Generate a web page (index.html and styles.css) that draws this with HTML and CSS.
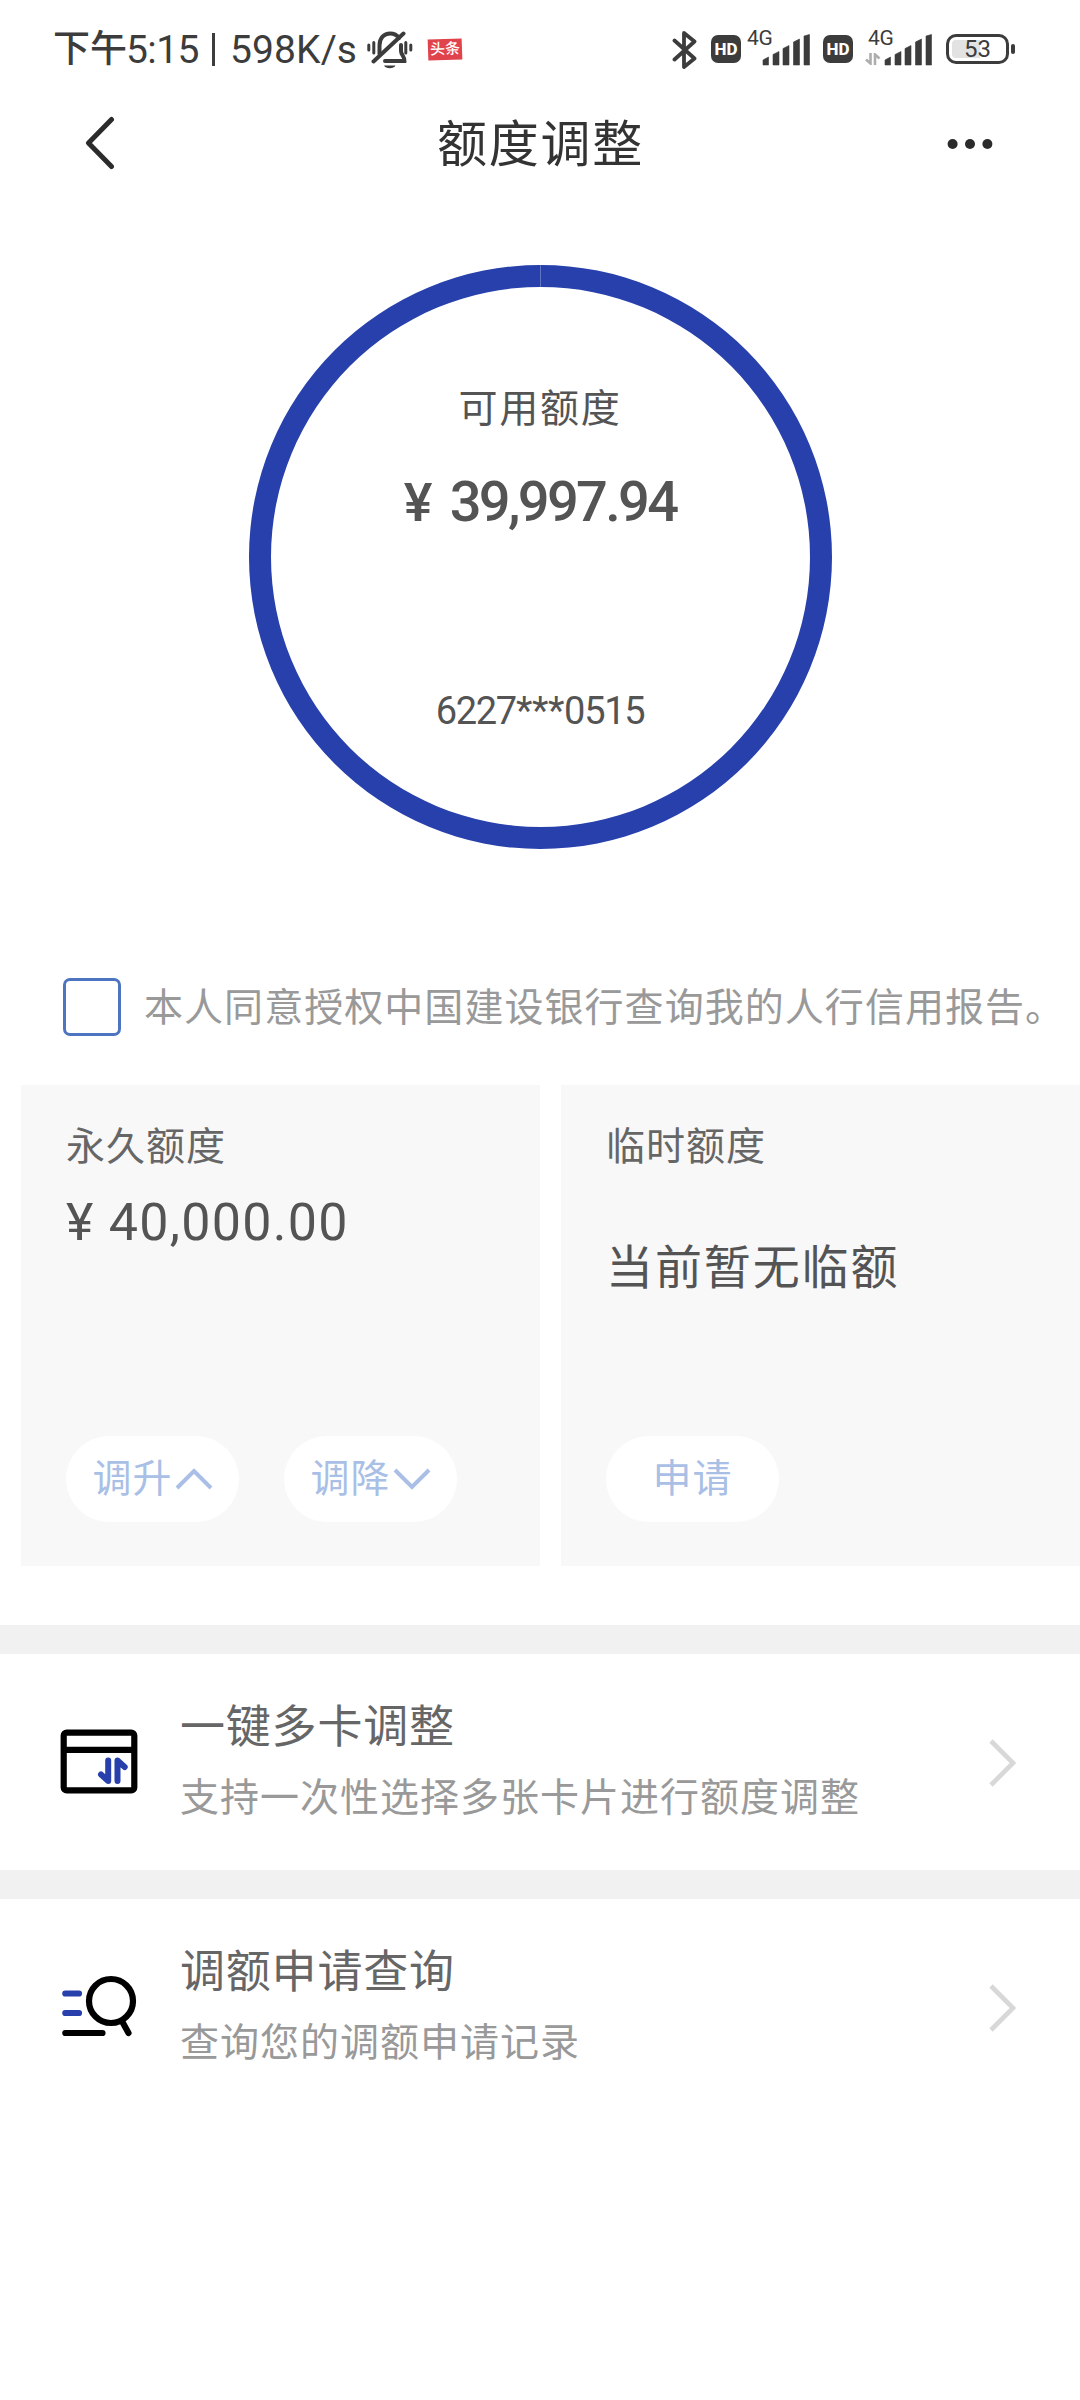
FILE: index.html
```html
<!DOCTYPE html>
<html lang="zh-CN">
<head>
<meta charset="utf-8">
<title>额度调整</title>
<link rel="stylesheet" href="styles.css">
</head>
<body>
<div class="statusbar">
  <div class="status-left">
    <span class="clock"><span class="clock-cn">下午</span><span class="clock-time">5:15</span><span class="clock-sep"></span><span class="clock-speed">598K/s</span></span>
    <svg class="ic-bell" width="46" height="38" viewBox="0 0 46 38" fill="none" stroke="#3c3c3c" stroke-width="4" stroke-linecap="round">
      <path d="M12.500 23V14.500C12.500 7 17 2.500 23 2.500C27 2.500 30 4 32 7"/>
      <path d="M34 14V20C34 24 38 26 37.500 30H18"/>
      <path d="M36.500 2.500L6.500 30.500"/>
      <path d="M17 34.500H28.500C27 38 18.500 38 17 34.500Z" fill="#3c3c3c" stroke="none"/>
      <path d="M1.800 14V19M6.800 11.500V22M38.800 11.500V22M43.800 14V19" stroke-width="3"/>
    </svg>
    <span class="toutiao">头条</span>
  </div>
  <div class="status-right">
    <svg class="ic-bt" width="26" height="40" viewBox="0 0 26 40" fill="none" stroke="#3c3c3c" stroke-width="3.800" stroke-linejoin="round" stroke-linecap="round"><path d="M2.500 10.500L22.500 28.500L12 37V3L22.500 11.500L2.500 29.500"/></svg>
    <span class="hd">HD</span>
    <div class="signal">
      <span class="net">4G</span>
      <svg class="bars" width="48" height="32" viewBox="0 0 48 32" fill="#3c3c3c"><path d="M1 26L6.500 23V31H1ZM11 20.500L17 17.500V31H11ZM21 14.500L27 11.500V31H21ZM31.500 8L37.500 5V31H31.500ZM42 2L47.500 .5V31H42Z" stroke="#3c3c3c" stroke-width=".6" stroke-linejoin="round"/></svg>
    </div>
    <span class="hd hd-second">HD</span>
    <div class="signal signal-second">
      <span class="net">4G</span>
      <svg class="updown" width="16" height="12" viewBox="0 0 16 12" fill="none" stroke="#adadad" stroke-width="2.600"><path d="M5.500 0V10.500L1 6.500M10 12V1.500L14.500 5.500"/></svg>
      <svg class="bars" width="48" height="32" viewBox="0 0 48 32" fill="#3c3c3c"><path d="M1 26L6.500 23V31H1ZM11 20.500L17 17.500V31H11ZM21 14.500L27 11.500V31H21ZM31.500 8L37.500 5V31H31.500ZM42 2L47.500 .5V31H42Z" stroke="#3c3c3c" stroke-width=".6" stroke-linejoin="round"/></svg>
    </div>
    <div class="battery"><span class="battery-body">53</span><span class="battery-nub"></span></div>
  </div>
</div>

<header class="navbar">
  <svg class="back" width="32" height="56" viewBox="0 0 32 56" fill="none" stroke="#2b2b2b" stroke-width="5" stroke-linecap="round" stroke-linejoin="round"><path d="M28.500 4.500L5.500 28L28.500 51.500"/></svg>
  <h1 class="title">额度调整</h1>
  <svg class="more" width="46" height="12" viewBox="0 0 46 12" fill="#2b2b2b"><circle cx="5.600" cy="6" r="5"/><circle cx="23" cy="6" r="5"/><circle cx="40.400" cy="6" r="5"/></svg>
</header>

<section class="gauge">
  <div class="ring">
    <div class="ring-label">可用额度</div>
    <div class="ring-amount"><span class="yen">¥</span>39,997.94</div>
    <div class="ring-card">6227<span class="mask">***</span>0515</div>
  </div>
</section>

<label class="consent">
  <span class="checkbox"></span>
  <span class="consent-text">本人同意授权中国建设银行查询我的人行信用报告。</span>
</label>

<section class="limits">
  <div class="limit-card">
    <div class="limit-name">永久额度</div>
    <div class="limit-amount"><span class="yen">¥</span>40,000.00</div>
    <div class="actions">
      <button class="pill"><span>调升</span><svg width="38" height="24" viewBox="0 0 38 24" fill="none" stroke="#a9bfe6" stroke-width="4"><path d="M2 21L19 4L36 21"/></svg></button>
      <button class="pill"><span>调降</span><svg width="38" height="24" viewBox="0 0 38 24" fill="none" stroke="#a9bfe6" stroke-width="4"><path d="M2 3L19 20L36 3"/></svg></button>
    </div>
  </div>
  <div class="limit-card">
    <div class="limit-name">临时额度</div>
    <div class="limit-empty">当前暂无临额</div>
    <div class="actions"><button class="pill"><span>申请</span></button></div>
  </div>
</section>

<nav class="menu">
  <a class="row">
    <svg class="row-icon" width="80" height="72" viewBox="0 0 80 72" fill="none" stroke="#000" stroke-width="6.200" stroke-linecap="round" stroke-linejoin="round">
      <rect x="3.700" y="6.600" width="70.600" height="57.800" rx="3"/>
      <path d="M4 23.800H74" stroke-linecap="butt"/>
      <path d="M48.200 34.500V55L41 48.500M57.500 55V34.500L64.700 41" stroke="#2740ac" stroke-width="6"/>
    </svg>
    <span class="row-text"><span class="row-title">一键多卡调整</span><span class="row-desc">支持一次性选择多张卡片进行额度调整</span></span>
    <svg class="chev" width="30" height="52" viewBox="0 0 30 52" fill="none" stroke="#d8d8d8" stroke-width="4.600"><path d="M3 4L25 26L3 48"/></svg>
  </a>
  <a class="row">
    <svg class="row-icon" width="80" height="72" viewBox="0 0 80 72" fill="none" stroke="#000" stroke-width="6.200" stroke-linecap="round" stroke-linejoin="round">
      <path d="M5.300 22.500H19M5.300 42H19" stroke="#2740ac"/>
      <path d="M5.300 62H42.500M63 52L68.500 62"/>
      <circle cx="51" cy="30" r="22"/>
    </svg>
    <span class="row-text"><span class="row-title">调额申请查询</span><span class="row-desc">查询您的调额申请记录</span></span>
    <svg class="chev" width="30" height="52" viewBox="0 0 30 52" fill="none" stroke="#d8d8d8" stroke-width="4.600"><path d="M3 4L25 26L3 48"/></svg>
  </a>
</nav>
</body>
</html>
```
FILE: styles.css
```css
* { box-sizing: border-box; }
body {
  margin: 0;
  width: 1080px;
  min-height: 2400px;
  background: #fff;
  color: #545454;
  font-family: Roboto, "Noto Sans CJK SC", sans-serif;
}
svg { display: block; flex: none; }

.statusbar {
  height: 100px;
  padding: 0 65px 0 53px;
  display: flex;
  justify-content: space-between;
  color: #3c3c3c;
}
.status-left, .status-right { display: flex; height: 100px; align-items: center; }
.clock { display: flex; align-items: center; height: 98px; font-size: 39px; line-height: 50px; width: 314px; white-space: nowrap; }
.clock-cn { font-size: 37px; font-weight: 500; width: 73px; }
.clock-time { letter-spacing: -.6px; width: 86px; }
.clock-sep { width: 3px; height: 33px; background: #3c3c3c; margin: 0 15px 2px 0; }
.clock-speed { letter-spacing: .1px; }
.toutiao {
  margin: 0 0 2px 15px;
  width: 34px;
  height: 21px;
  background: #e0434c;
  color: #fff;
  font-size: 15px;
  font-weight: 500;
  line-height: 20px;
  text-align: center;
  transform: rotate(-2deg);
}
.ic-bt { margin-right: 1px; }
.hd {
  width: 30px;
  height: 28px;
  margin: 0 6px 2px 12px;
  border-radius: 7px;
  background: #3c3c3c;
  color: #fff;
  font-size: 17px;
  font-weight: 800;
  line-height: 28px;
  text-align: center;
}
.hd-second { margin-left: 11px; margin-right: 12px; }
.signal { position: relative; width: 65px; height: 36px; }
.signal .bars { margin-left: 15px; margin-top: 2px; }
.net { position: absolute; left: 0; top: -6px; font-size: 21px; line-height: 24px; letter-spacing: -.3px; }
.signal-second { width: 68px; }
.signal-second .bars { margin-left: 19px; }
.signal-second .net { left: 3px; }
.updown { position: absolute; left: 0; top: 21px; }
.battery { display: flex; align-items: center; gap: 2px; margin: 0 0 2px 13px; }
.battery-body {
  width: 63px;
  height: 30px;
  border: 3px solid #3c3c3c;
  border-radius: 10px;
  background: linear-gradient(90deg, #e2e2e2 31px, #fff 31px) padding-box;
  box-shadow: inset 0 0 0 3px #fff;
  font-size: 24px;
  line-height: 25px;
  text-align: center;
}
.battery-nub { width: 4px; height: 10px; border-radius: 2px; background: #3c3c3c; }

.navbar { height: 90px; padding: 0 86px 0 83px; display: flex; align-items: center; justify-content: space-between; }
.back { margin-top: -4px; }
.title { margin: -1px 0 0 19px; font-size: 50px; font-weight: 400; line-height: 72px; letter-spacing: 1.700px; color: #333; }
.more { margin-right: 1px; margin-top: -2px; }

.gauge { padding-top: 75px; display: flex; justify-content: center; }
.ring {
  position: relative;
  width: 583px;
  height: 584px;
  border: 22px solid #2740ac;
  border-radius: 50%;
  display: flex;
  flex-direction: column;
  align-items: center;
}
.ring::before {
  content: "";
  position: absolute;
  top: -22px;
  left: 269px;
  width: 1px;
  height: 22px;
  background: #6075c4;
}
.ring-label { margin-top: 92px; font-size: 39px; line-height: 60px; letter-spacing: 1.700px; }
.ring-amount { margin-top: 33px; font-size: 56px; line-height: 60px; font-weight: 500; white-space: pre; letter-spacing: -2.700px; }
.ring-amount .yen { font-size: 54px; margin-right: 20px; }
.ring-card { margin-top: 148px; font-size: 38px; line-height: 60px; letter-spacing: -1.300px; }
.mask { letter-spacing: -.3px; }

.consent { display: flex; align-items: center; margin-top: 118px; padding-left: 63px; height: 80px; }
.checkbox { width: 58px; height: 58px; border: 3px solid #4d74c0; border-radius: 7px; }
.consent-text { margin: -7px 0 0 23px; font-size: 39px; letter-spacing: 1.050px; color: #999; white-space: nowrap; }

.limits { display: grid; grid-template-columns: 519px 519px; gap: 21px; margin: 38px 0 0 21px; }
.limit-card { height: 481px; padding: 32px 45px 44px; background: #f8f8f8; display: flex; flex-direction: column; }
.limit-name { font-size: 39px; line-height: 60px; letter-spacing: 1px; color: #666; }
.limit-amount { margin-top: 16px; font-size: 52px; line-height: 60px; white-space: pre; letter-spacing: 1.300px; }
.limit-amount .yen { margin-right: 14px; }
.limit-empty { margin-top: 61px; font-size: 47px; line-height: 60px; letter-spacing: 1.900px; }
.actions { margin-top: auto; display: flex; gap: 45px; }
.pill {
  width: 173px;
  height: 86px;
  padding: 0;
  border: 0;
  border-radius: 43px;
  background: #fff;
  color: #a9bfe6;
  font: 400 39px/60px Roboto, "Noto Sans CJK SC", sans-serif;
  letter-spacing: 1px;
  display: flex;
  align-items: center;
  justify-content: center;
  gap: 2px;
}

.menu { margin-top: 59px; }
.row { display: flex; height: 245px; padding: 29px 62px 0 60px; border-top: 29px solid #f1f1f1; }
.row-icon { margin-top: 43px; }
.row-text { flex: 1; margin-left: 40px; display: flex; flex-direction: column; }
.row-title { margin-top: 15px; font-size: 45px; line-height: 60px; letter-spacing: .8px; color: #666; }
.row-desc { margin-top: 10px; font-size: 39px; line-height: 60px; letter-spacing: 1px; color: #999; }
.chev { margin-top: 54px; }
```
